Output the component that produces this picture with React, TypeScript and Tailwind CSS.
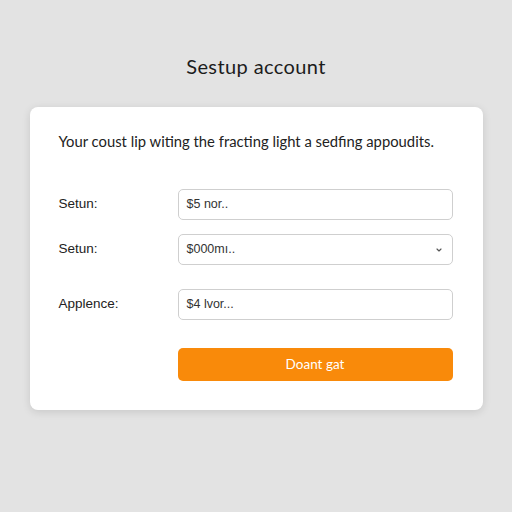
import { ChevronDown } from 'lucide-react';

const ROWS = [
  { label: 'Setun:', value: '$5 nor..', select: false, mt: 'mt-[38px]' },
  { label: 'Setun:', value: '$000mı..', select: true, mt: 'mt-[14px]' },
  { label: 'Applence:', value: '$4 Ɩvor...', select: false, mt: 'mt-[24px]' },
];

export default function App() {
  return (
    <div className="min-h-[512px] w-full bg-[#e3e3e3] flex flex-col items-center pt-[52px]" style={{ fontFamily: 'Lato, "Open Sans", sans-serif' }}>
      <h1 className="text-[20px] leading-[28px] text-[#1c1c1c] tracking-[0.4px]">Sestup account</h1>

      <div className="mt-[27px] w-[453px] bg-white rounded-lg shadow-[0_2px_8px_rgba(0,0,0,0.12)] pl-[29px] pr-[30px] pt-[24px] pb-[29px]">
        <p className="text-[14.8px] leading-[20px] text-[#222]">Your coust lip witing the fracting light a sedfing appoudits.</p>

        {ROWS.map((row, i) => (
          <div key={i} className={`flex items-center ${row.mt}`}>
            <label className="w-[119px] text-[13.5px] text-[#222]" style={{ fontFamily: '"Liberation Sans", Arial, sans-serif' }}>{row.label}</label>
            <div className="flex-1 h-[31px] border border-[#cfcfcf] rounded-[5px] flex items-center justify-between pl-[8px] pr-[9px]">
              <span className="text-[12.5px] text-[#333]" style={{ fontFamily: '"Liberation Sans", Arial, sans-serif' }}>{row.value}</span>
              {row.select && <ChevronDown size={8} strokeWidth={3.5} className="text-[#555]" />}
            </div>
          </div>
        ))}

        <div className="flex mt-[28px]">
          <div className="w-[119px]" />
          <button className="flex-1 h-[33px] rounded-[5px] bg-[#f98a0a] text-white text-[13.5px]">Doant gat</button>
        </div>
      </div>
    </div>
  );
}
